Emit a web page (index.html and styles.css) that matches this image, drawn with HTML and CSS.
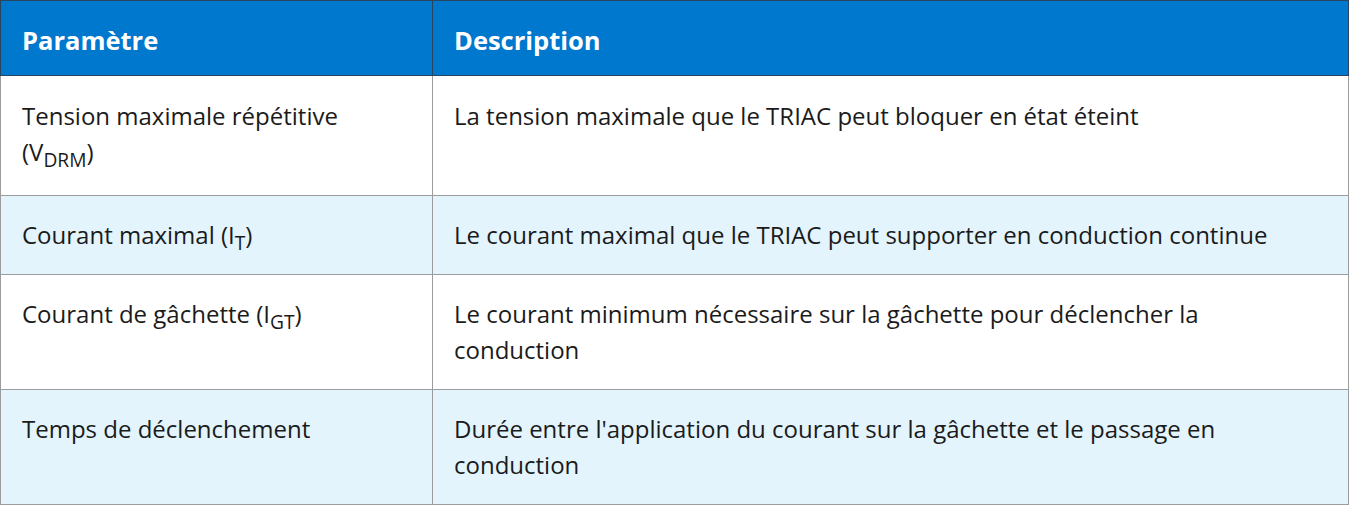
FILE: index.html
```html
<!DOCTYPE html>
<html lang="fr">
<head>
<meta charset="utf-8">
<link rel="stylesheet" href="styles.css">
</head>
<body>
<table class="spec">
  <thead>
    <tr><th class="col-param">Paramètre</th><th>Description</th></tr>
  </thead>
  <tbody>
    <tr class="first"><td>Tension maximale répétitive (V<sub>DRM</sub>)</td><td>La tension maximale que le TRIAC peut bloquer en état éteint</td></tr>
    <tr class="alt"><td>Courant maximal (I<sub>T</sub>)</td><td>Le courant maximal que le TRIAC peut supporter en conduction continue</td></tr>
    <tr><td>Courant de gâchette (I<sub>GT</sub>)</td><td>Le courant minimum nécessaire sur la gâchette pour déclencher la conduction</td></tr>
    <tr class="alt"><td>Temps de déclenchement</td><td>Durée entre l'application du courant sur la gâchette et le passage en conduction</td></tr>
  </tbody>
</table>
</body>
</html>
```
FILE: styles.css
```css
html, body { margin: 0; padding: 0; background: #fff; }
body { font-family: "Open Sans", "Noto Sans", sans-serif; color: #1b1b1b; }
.spec {
  width: 100%;
  border-collapse: collapse;
  font-size: 24px;
  line-height: 36px;
}
.spec th {
  background: #0078ce;
  color: #fff;
  text-align: left;
  font-weight: 700;
  font-size: 25.5px;
  padding: 21px 21px 17px;
  border: 1px solid #2a4460;
}
.spec th.col-param { width: 389px; }
.spec td {
  padding: 21px 21px 21px;
  border: 1px solid #9c9c9c;
  vertical-align: top;
  font-weight: 400;
}
.spec tr.first td { padding-top: 22px; padding-bottom: 25px; }
.spec tr.alt td { background: #e3f4fd; }
.spec sub { font-size: 0.8em; vertical-align: -0.3em; line-height: 0; }
```
